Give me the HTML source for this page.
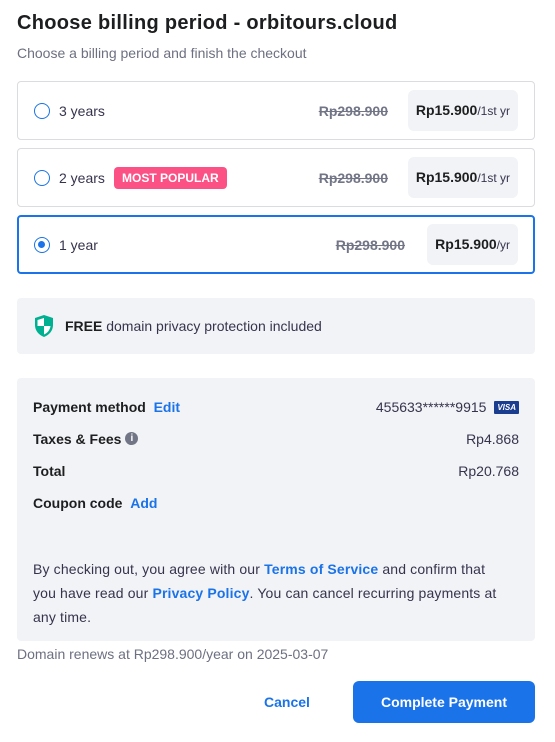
<!DOCTYPE html>
<html><head><meta charset="utf-8"><style>
*{box-sizing:border-box;margin:0;padding:0}
body{width:555px;height:742px;background:#fff;font-family:"Liberation Sans",sans-serif;color:#2f1c6a;position:relative;overflow:hidden}
.abs{position:absolute}
h1{position:absolute;left:17px;top:12px;font-size:20px;font-weight:bold;color:#1d1e20;letter-spacing:0.3px}
.sub{left:17px;top:45px;font-size:14px;color:#6d7081}
.opt{position:absolute;left:17px;width:518px;height:59px;border:1px solid #dadce0;border-radius:4px}
.opt.sel{border:2px solid #1a73e8}
.radio{position:absolute;left:16px;top:50%;margin-top:-8px;width:16px;height:16px;border:1.5px solid #1a73e8;border-radius:50%}
.sel .radio::after{content:"";position:absolute;left:3px;top:3px;width:7px;height:7px;border-radius:50%;background:#1a73e8}
.lbl{position:absolute;left:41px;top:50%;transform:translateY(-50%);font-size:14px;color:#36344d}
.old{position:absolute;top:50%;transform:translateY(-50%);font-size:14px;font-weight:bold;color:#727586;text-decoration:line-through}
.price{position:absolute;right:16px;top:8px;height:41px;border-radius:6px;background:#f2f3f6;font-size:14px;font-weight:bold;color:#1d1e20;line-height:41px;padding:0 8px}
.price span{font-weight:normal;font-size:12px;color:#36344d}
.badge{position:absolute;left:96px;top:50%;transform:translateY(-50%);background:#fc5185;color:#fff;font-size:12px;font-weight:bold;padding:4px 8px;border-radius:4px}
.box{position:absolute;left:17px;width:518px;background:#f2f3f6;border-radius:4px}
.row{position:absolute;left:16px;right:16px;font-size:14px;color:#1d1e20}
.row b{font-weight:bold}
.r{position:absolute;right:0;top:0;color:#36344d}
a{color:#1a73e8;font-weight:bold;text-decoration:none}
</style></head><body>
<h1>Choose billing period - orbitours.cloud</h1>
<div class="abs sub">Choose a billing period and finish the checkout</div>

<div class="opt" style="top:81px"><div class="radio"></div><div class="lbl">3 years</div><div class="old" style="right:146px">Rp298.900</div><div class="price">Rp15.900<span>/1st yr</span></div></div>
<div class="opt" style="top:148px"><div class="radio"></div><div class="lbl">2 years</div><div class="badge">MOST POPULAR</div><div class="old" style="right:146px">Rp298.900</div><div class="price">Rp15.900<span>/1st yr</span></div></div>
<div class="opt sel" style="top:215px"><div class="radio" style="left:15px"></div><div class="lbl" style="left:40px">1 year</div><div class="old" style="right:128px">Rp298.900</div><div class="price" style="right:15px;top:7px">Rp15.900<span>/yr</span></div></div>

<div class="box" style="top:298px;height:56px">
<svg class="abs" style="left:17px;top:16px" width="20" height="24" viewBox="0 0 20 24"><path d="M10 1L1 4v7c0 6 4 10 9 12 5-2 9-6 9-12V4z" fill="#00b090"/><path d="M10 4v8H3.5V6zM10 12h6.5c-.5 4-3 7-6.5 8.5z" fill="#fff"/></svg>
<div class="abs" style="left:48px;top:20px;font-size:14px;color:#36344d"><b style="color:#1d1e20">FREE</b> domain privacy protection included</div>
</div>

<div class="box" style="top:378px;height:263px">
<div class="row" style="top:21px"><b>Payment method</b> &nbsp;<a>Edit</a><div class="r">455633******9915 <span style="display:inline-block;background:#1a3d8f;color:#fff;font-size:8px;font-weight:bold;font-style:italic;padding:2px 3px;border-radius:1px;vertical-align:2px;margin-left:4px">VISA</span></div></div>
<div class="row" style="top:53px"><b>Taxes &amp; Fees</b> <span style="display:inline-block;width:13px;height:13px;border-radius:50%;background:#727586;color:#fff;font-size:10px;font-weight:bold;text-align:center;line-height:13px;vertical-align:middle;position:relative;top:-2px">i</span><div class="r">Rp4.868</div></div>
<div class="row" style="top:85px"><b>Total</b><div class="r">Rp20.768</div></div>
<div class="row" style="top:117px"><b>Coupon code</b> &nbsp;<a>Add</a></div>
<div class="row" style="top:179px;right:30px;line-height:24px;color:#36344d;letter-spacing:0.15px">By checking out, you agree with our <a>Terms of Service</a> and confirm that you have read our <a>Privacy Policy</a>. You can cancel recurring payments at any time.</div>
</div>

<div class="abs" style="left:17px;top:646px;font-size:14px;color:#6d7081">Domain renews at Rp298.900/year on 2025-03-07</div>
<div class="abs" style="left:264px;top:694px;font-size:14px;font-weight:bold;color:#1a73e8">Cancel</div>
<div class="abs" style="left:353px;top:681px;width:182px;height:42px;background:#1a73e8;border-radius:6px;color:#fff;font-size:14px;font-weight:bold;text-align:center;line-height:42px">Complete Payment</div>
</body></html>
